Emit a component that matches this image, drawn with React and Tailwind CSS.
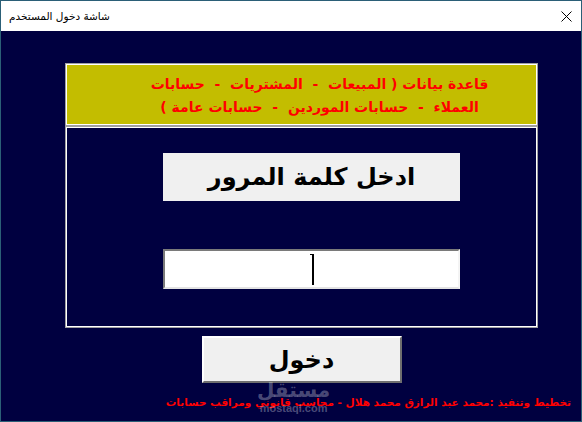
import React from "react";

const arabic = { fontFamily: '"DejaVu Sans", sans-serif' };

function CloseIcon() {
  return (
    <svg width="11" height="11" viewBox="0 0 11 11" className="block">
      <path d="M0.5 0.5 L10.5 10.5 M10.5 0.5 L0.5 10.5" stroke="#000" strokeWidth="1" />
    </svg>
  );
}

function Frame({ className = "", children }) {
  return (
    <div
      className={`border border-[#a0a0a0] shadow-[inset_0_0_0_1px_#ffffff] ${className}`}
    >
      {children}
    </div>
  );
}

export default function App() {
  return (
    <div
      className="relative flex h-[422px] w-[582px] flex-col overflow-hidden border border-[#2b5f77] bg-[#000040]"
      style={arabic}
    >
      {/* title bar */}
      <div className="flex h-[30px] shrink-0 items-center justify-between bg-white pl-[8px] pr-[9px]">
        <span dir="rtl" className="text-[10.5px] leading-none text-black">
          شاشة دخول المستخدم
        </span>
        <CloseIcon />
      </div>

      <div className="flex flex-col pl-[64px] pt-[32px]">
        {/* header label */}
        <Frame className="flex h-[63px] w-[473px] items-center justify-center bg-[#c3bd00] pl-[36px] pt-[3px]">
          <p
            dir="rtl"
            className="whitespace-pre text-center text-[14px] font-bold leading-[23px] text-[#ff0000]"
          >
            {"قاعدة بيانات ( المبيعات  -  المشتريات  -  حسابات"}
            <br />
            {"العملاء  -  حسابات الموردين  -  حسابات عامة )"}
          </p>
        </Frame>

        {/* password panel */}
        <Frame className="flex h-[202px] w-[473px] flex-col pl-[97px] pt-[26px]">
          <div className="flex h-[48px] w-[297px] items-center justify-center bg-[#f0f0f0]">
            <span dir="rtl" className="text-[24px] font-bold leading-none text-black">
              ادخل كلمة المرور
            </span>
          </div>
          <div className="mt-[48px] flex h-[40px] w-[297px] items-center justify-center border-2 border-b-[#e3e3e3] border-l-[#7a7a7a] border-r-[#f4f4f4] border-t-[#7a7a7a] bg-white">
            <span className="relative ml-[2px] block h-[31px] w-[2px] bg-black">
              <span className="absolute left-[-2px] top-0 block h-[1px] w-[2px] bg-black" />
            </span>
          </div>
        </Frame>

        {/* login button */}
        <div className="mt-[8px] flex w-[473px] justify-center">
          <button className="flex h-[47px] w-[200px] items-center justify-center border-2 border-b-[#6f6f6f] border-l-[#ffffff] border-r-[#6f6f6f] border-t-[#ffffff] bg-[#f0f0f0]">
            <span dir="rtl" className="text-[24px] font-bold leading-none text-black">
              دخول
            </span>
          </button>
        </div>
      </div>

      {/* credits */}
      <div className="mt-[12px] flex justify-end pr-[10px]">
        <p dir="rtl" className="text-[10.5px] font-bold leading-[14px] text-[#ff0000]">
          تخطيط وتنفيذ :محمد عبد الرازق محمد هلال - محاسب قانوني ومراقب حسابات
        </p>
      </div>

      {/* site stamp */}
      <div className="pointer-events-none absolute left-[256px] top-[377px] flex flex-col items-center text-white/30">
        <span dir="rtl" className="text-[20px] font-bold leading-[24px]">
          مستقل
        </span>
        <span className="text-[11px] font-bold leading-[12px]" style={{ fontFamily: '"Liberation Sans", sans-serif' }}>
          mostaql.com
        </span>
      </div>
    </div>
  );
}
